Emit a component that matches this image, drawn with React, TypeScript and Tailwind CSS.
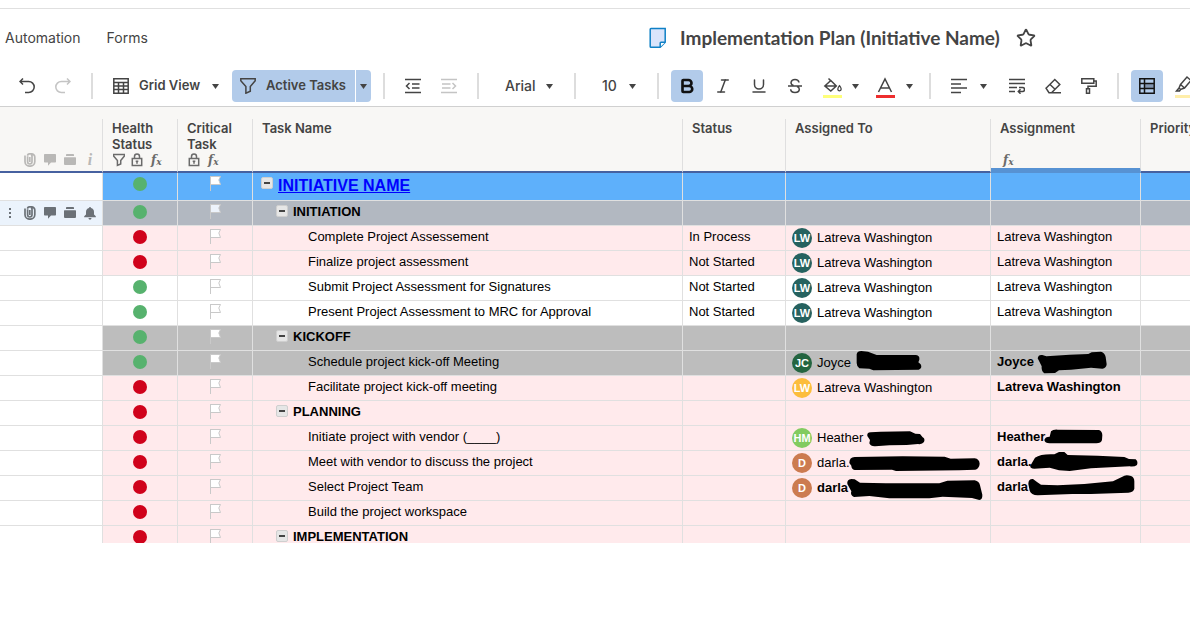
import type { ReactNode } from 'react';
import { useState } from 'react';
import { Bold, Italic, Star, Underline } from 'lucide-react';

type Tone = 'blue' | 'slate' | 'pink' | 'white' | 'gray';

interface Person {
  initials: string;
  color: string;
  name: string;
  bold?: boolean;
  mark?: string;
}

interface Row {
  id: number;
  task: string;
  level: 0 | 1 | 2;
  tone: Tone;
  health: 'green' | 'red';
  status?: string;
  assigned?: Person;
  assignment?: { name: string; bold?: boolean; mark?: string };
}

const latreva: Person = { initials: 'LW', color: 'bg-[#26625f]', name: 'Latreva Washington' };

const rows: Row[] = [
  { id: 1, task: 'INITIATIVE NAME', level: 0, tone: 'blue', health: 'green' },
  { id: 2, task: 'INITIATION', level: 1, tone: 'slate', health: 'green' },
  { id: 3, task: 'Complete Project Assessement', level: 2, tone: 'pink', health: 'red', status: 'In Process', assigned: latreva, assignment: { name: 'Latreva Washington' } },
  { id: 4, task: 'Finalize project assessment', level: 2, tone: 'pink', health: 'red', status: 'Not Started', assigned: latreva, assignment: { name: 'Latreva Washington' } },
  { id: 5, task: 'Submit Project Assessment for Signatures', level: 2, tone: 'white', health: 'green', status: 'Not Started', assigned: latreva, assignment: { name: 'Latreva Washington' } },
  { id: 6, task: 'Present Project Assessment to MRC for Approval', level: 2, tone: 'white', health: 'green', status: 'Not Started', assigned: latreva, assignment: { name: 'Latreva Washington' } },
  { id: 7, task: 'KICKOFF', level: 1, tone: 'gray', health: 'green' },
  {
    id: 8,
    task: 'Schedule project kick-off Meeting',
    level: 2,
    tone: 'gray',
    health: 'green',
    assigned: {
      initials: 'JC',
      color: 'bg-[#246540]',
      name: 'Joyce',
      mark: 'M212 10Q214 0 226 0L246 2L272 12L390 12Q402 14 400 26L397 34L404 40Q410 52 398 56L262 58L250 53L220 52Q212 46 212 36Z',
    },
    assignment: {
      name: 'Joyce',
      bold: true,
      mark: 'M140 22Q142 10 154 12L166 16L236 11L292 9L302 4L330 2Q342 6 344 18L347 40Q346 52 334 53L300 50L240 56L204 58L192 66L160 67Q150 60 152 46Z',
    },
  },
  {
    id: 9,
    task: 'Facilitate project kick-off meeting',
    level: 2,
    tone: 'pink',
    health: 'red',
    assigned: { ...latreva, color: 'bg-[#fcbd3c]' },
    assignment: { name: 'Latreva Washington', bold: true },
  },
  { id: 10, task: 'PLANNING', level: 1, tone: 'pink', health: 'red' },
  {
    id: 11,
    task: 'Initiate project with vendor (____)',
    level: 2,
    tone: 'pink',
    health: 'red',
    assigned: {
      initials: 'HM',
      color: 'bg-[#82cb60]',
      name: 'Heather',
      mark: 'M244 30Q242 20 254 19L284 17L372 16L388 23L402 24L410 34Q418 38 414 48Q408 56 396 54L362 57L310 58L268 61Q254 62 250 52L252 42Z',
    },
    assignment: {
      name: 'Heather',
      bold: true,
      mark: 'M160 42Q162 32 176 32L180 16Q186 10 200 11L324 12Q334 16 334 28L333 42Q330 52 316 52L176 52Q162 52 160 42Z',
    },
  },
  {
    id: 12,
    task: 'Meet with vendor to discuss the project',
    level: 2,
    tone: 'pink',
    health: 'red',
    assigned: {
      initials: 'D',
      color: 'bg-[#cc7b50]',
      name: 'darla.',
      mark: 'M190 36Q190 18 206 18L350 16L476 17L494 23L566 22Q580 24 581 38Q580 52 568 56L520 58L330 60L318 56L206 57Q196 54 196 44Z',
    },
    assignment: {
      name: 'darla.',
      bold: true,
      mark: 'M118 44L132 20Q150 8 190 10L204 3L220 3L230 12L320 14L400 18L414 24L434 25Q442 32 438 42Q430 48 416 46L300 52L236 60L204 58L176 50L130 53Q116 52 118 44Z',
    },
  },
  {
    id: 13,
    task: 'Select Project Team',
    level: 2,
    tone: 'pink',
    health: 'red',
    assigned: {
      initials: 'D',
      color: 'bg-[#cc7b50]',
      name: 'darla',
      bold: true,
      mark: 'M184 24Q182 10 196 9L206 10L222 20L300 22L460 22L484 14L566 13Q580 16 582 28L589 56Q590 70 580 72L558 66L470 62L430 67L310 67L250 60L204 63Q192 58 196 46Z',
    },
    assignment: {
      name: 'darla',
      bold: true,
      mark: 'M112 24Q112 8 126 9L138 18L150 26L200 28L280 24L366 16L394 2Q404 -6 420 0Q430 4 430 16L430 38Q428 48 412 50L300 54L244 54L140 58Q120 56 116 44Z',
    },
  },
  { id: 14, task: 'Build the project workspace', level: 2, tone: 'pink', health: 'red' },
  { id: 15, task: 'IMPLEMENTATION', level: 1, tone: 'pink', health: 'red' },
];

const tones: Record<Tone, string> = {
  blue: 'bg-[#5eb0fb]',
  slate: 'bg-[#b2b8c1]',
  pink: 'bg-[#ffeaec]',
  white: 'bg-white',
  gray: 'bg-[#bdbdbd]',
};

const indents = ['pl-2', 'pl-[23px]', 'pl-[55px]'];

/* ---------- Icons ---------- */

function Glyph({ children, className = 'size-4', box = '0 0 16 16', width = 1.5 }: { children: ReactNode; className?: string; box?: string; width?: number }) {
  return (
    <svg viewBox={box} className={`shrink-0 ${className}`} fill="none" stroke="currentColor" strokeWidth={width} aria-hidden="true">
      {children}
    </svg>
  );
}

const Caret = () => (
  <svg viewBox="0 0 7 5" className="h-[5px] w-[7px] shrink-0" fill="currentColor" aria-hidden="true">
    <path d="M0 0h7L3.5 5z" />
  </svg>
);

const funnelPath = 'M.8 .8h14.4v2L10.3 8.6v4.6l-4.4 2V8.6L.8 2.8z';

const ClipIcon = () => (
  <Glyph className="h-[14px] w-3" box="0 0 12 14" width={1.7}>
    <path d="M3.6 3.2v5.6a2.2 2.2 0 0 0 4.4 0V3.2a1.5 1.5 0 0 0-1-1.5M1 2.5v6.3a4.9 4.4 0 0 0 9.8 0V4.2A3.2 3.2 0 0 0 7.6 .9H5.4a1.8 1.8 0 0 0-1.8 1.8M5.8 4v5" />
  </Glyph>
);

const CommentIcon = () => (
  <svg viewBox="0 0 12 12" className="size-3" fill="currentColor" aria-hidden="true">
    <path d="M.8 0h10.4q.8 0 .8.8v6.9q0 .8-.8.8H7L4 11.8V8.5H.8Q0 8.5 0 7.7V.8Q0 0 .8 0z" />
  </svg>
);

const ProofIcon = () => (
  <svg viewBox="0 0 12 12" className="size-3" fill="currentColor" aria-hidden="true">
    <path d="M2.8 0h6.4q.8 0 .8.8V2H2V.8Q2 0 2.8 0zM.6 3.2h10.8q.6 0 .6.6V10q0 1-1 1H1q-1 0-1-1V3.8q0-.6.6-.6z" />
  </svg>
);

const BellIcon = () => (
  <svg viewBox="0 0 12 13" className="h-[13px] w-3" fill="currentColor" aria-hidden="true">
    <path d="M6 0q1 0 1 1Q10 1.900 10 5v2.500l1.800 1.800v.9H.2v-.9L2 7.500V5q0-3.100 3-4 0-1 1-1zM4.400 11h3.200q-.3 1.700-1.600 1.700T4.400 11z" />
  </svg>
);

const LockIcon = () => (
  <Glyph className="h-[14px] w-3" box="0 0 12 14" width={1.5}>
    <path d="M1.300 5.500h9.400v7H1.300zM3.500 5.500V3.400a2.500 2.500 0 0 1 5 0v2.100M6 8v2.800M4.700 8.300h2.600" />
  </Glyph>
);

const FunctionIcon = () => (
  <span aria-hidden="true" className="flex h-[14px] w-3 items-center pl-0.5 font-['DejaVu_Serif',serif] leading-none font-bold italic">
    <span className="text-[12px]">f</span>
    <span className="self-end text-[9px]">x</span>
  </span>
);

const FlagIcon = ({ pale }: { pale?: boolean }) => (
  <svg viewBox="0 0 11 15" className="h-[15px] w-[11px]" fill="none" stroke="#c9c9c9" aria-hidden="true">
    <path d="M.5 .5h10L8.800 4l1.700 4.500H.5z" fill={pale ? '#edf3fb' : '#fff'} />
    <path d="M.5 0V15" />
  </svg>
);

/* ---------- Toolbar ---------- */

function Tool({ label, active, muted, children }: { label: string; active?: boolean; muted?: boolean; children: ReactNode }) {
  return (
    <button
      type="button"
      aria-label={label}
      className={`flex size-8 shrink-0 items-center justify-center rounded-sm ${active ? 'bg-[#b2cbea] text-[#111]' : muted ? 'text-[#c4c4c4]' : 'hover:bg-gray-100'}`}
    >
      {children}
    </button>
  );
}

const CaretTool = ({ label }: { label: string }) => (
  <button type="button" aria-label={label} className="flex h-8 w-4 shrink-0 items-center justify-center">
    <Caret />
  </button>
);

const Divider = () => <div className="mx-3 h-[26px] w-0.5 shrink-0 bg-[#dddddd]" />;

function Picker({ label, options, className }: { label: string; options: string[]; className: string }) {
  return (
    <div className="relative flex h-8 shrink-0 items-center">
      <select aria-label={label} className={`h-8 appearance-none bg-transparent pl-[14px] text-sm font-medium outline-none ${className}`}>
        {options.map(option => (
          <option key={option}>{option}</option>
        ))}
      </select>
      <span className="pointer-events-none absolute right-[9px]">
        <Caret />
      </span>
    </div>
  );
}

function Toolbar() {
  return (
    <div className="flex h-10 items-start overflow-hidden border-b border-[#d0d0d0] pt-[3px] pl-[11px] text-[#444]">
      <div className="flex shrink-0 items-center">
        <div className="flex gap-1">
          <Tool label="Undo">
            <Glyph>
              <path d="M1 3.500h8.700a5.500 5.500 0 0 1 0 11H6M4 .5l-3 3 3 3" />
            </Glyph>
          </Tool>
          <Tool label="Redo" muted>
            <Glyph>
              <path d="M15 3.500H6.300a5.500 5.500 0 0 0 0 11H10M12 .5l3 3-3 3" />
            </Glyph>
          </Tool>
        </div>
        <Divider />
        <button type="button" className="flex h-8 w-[127px] items-center pl-2 text-[13px] font-semibold">
          <Glyph>
            <path d="M.8 .8h14.400v14.400H.8zM.8 4.500h14.400M.8 8h14.400M.8 11.600h14.400M5.500 4.500v10.700M10.500 4.500v10.700" />
          </Glyph>
          <span className="ml-2.5 flex-1 text-left whitespace-nowrap">Grid View</span>
          <span className="mr-[13px]">
            <Caret />
          </span>
        </button>
        <div className="flex gap-px">
          <button type="button" className="flex h-8 w-[123px] items-center gap-2.5 rounded-l-sm bg-[#b2cbea] pl-2 text-[13px] font-semibold whitespace-nowrap">
            <Glyph>
              <path d={funnelPath} />
            </Glyph>
            Active Tasks
          </button>
          <button type="button" aria-label="Filter options" className="flex h-8 w-[15px] items-center justify-center rounded-r-sm bg-[#b2cbea]">
            <Caret />
          </button>
        </div>
        <Divider />
        <div className="flex gap-1">
          <Tool label="Outdent">
            <Glyph>
              <path d="M0 1.500h16M7 6h7.500M7 10h7.500M0 14.500h16M4.500 5 1.500 8l3 3" />
            </Glyph>
          </Tool>
          <Tool label="Indent" muted>
            <Glyph>
              <path d="M0 1.500h16M1 6h8.500M1 10h8.500M0 14.500h16M11.500 5l3 3-3 3" />
            </Glyph>
          </Tool>
        </div>
        <Divider />
        <Picker label="Font" options={['Arial', 'Tahoma', 'Verdana']} className="w-[71px]" />
        <Divider />
        <Picker label="Font size" options={['10', '12', '14']} className="w-[57px]" />
        <Divider />
        <div className="flex gap-1">
          <Tool label="Bold" active>
            <Bold className="size-[18px]" strokeWidth={3.5} />
          </Tool>
          <Tool label="Italic">
            <Italic className="size-[18px]" strokeWidth={2} />
          </Tool>
          <Tool label="Underline">
            <Underline className="size-[18px]" strokeWidth={2} />
          </Tool>
          <Tool label="Strikethrough">
            <Glyph>
              <path d="M12 4.500Q11.500 1.500 8 1.500T4 4.500Q4 6.700 6.500 7.500M1 8h14M10 8.500q2.300 .8 2.300 2.800Q12.300 14.500 8 14.500T3.700 11.300" />
            </Glyph>
          </Tool>
          <Tool label="Fill color">
            <Glyph className="size-8" box="0 0 32 32">
              <path d="M9.800 16l6-5.500 5.500 5.500-5.500 5zM10 16h11M13.500 8.500l3 3" />
              <path d="M24.500 15.700q1.700 2.200 1.700 3.400a1.700 1.700 0 0 1-3.400 0q0-1.200 1.700-3.400z" strokeWidth="1.300" />
              <path d="M8 26.500h19" stroke="#feff7a" strokeWidth="3" />
            </Glyph>
          </Tool>
        </div>
        <CaretTool label="Fill color options" />
        <div className="w-1.5" />
        <Tool label="Text color">
          <Glyph className="size-8" box="0 0 32 32">
            <path d="M9.500 22l6.500-13 6.500 13M12 18h8" />
            <path d="M7 26.500h19" stroke="#ee2e2e" strokeWidth="3" />
          </Glyph>
        </Tool>
        <CaretTool label="Text color options" />
        <Divider />
        <Tool label="Align left">
          <Glyph>
            <path d="M0 1.500h16M0 6h10M0 10h16M0 14.500h10" />
          </Glyph>
        </Tool>
        <CaretTool label="Align options" />
        <div className="ml-2.5 flex gap-1">
          <Tool label="Wrap text">
            <Glyph>
              <path d="M0 1.500h16M0 5.500h16M0 9.500h8M0 13.500h6M10 9.500h3.500a2 2 0 0 1 0 4H9.500M11.500 11.300l-2.200 2.200 2.200 2.200" />
            </Glyph>
          </Tool>
          <Tool label="Clear formatting">
            <Glyph>
              <path d="M1 10.200 9.800 1.500l5 5-8.300 8.200H4zM5 6.500l5.300 5M4 14.700h12" />
            </Glyph>
          </Tool>
          <Tool label="Format painter">
            <Glyph>
              <path d="M.8 .8h12v4.400H.8zM12.800 3H15.200v5.200H7v2.500M5.500 10.700h3v4.500h-3z" />
            </Glyph>
          </Tool>
        </div>
        <Divider />
        <div className="flex gap-1">
          <Tool label="Highlight changes" active>
            <Glyph>
              <path d="M6 6h9v4.500H6z" fill="#8295b0" stroke="none" />
              <path d="M.8 .8h14.400v14.400H.8zM5.500 .8v14.400M.8 5.500h14.400M.8 10.500h14.400" />
            </Glyph>
          </Tool>
          <Tool label="Highlighter">
            <Glyph className="size-8" box="0 0 32 32">
              <path d="M13.500 14.500l6.500-7.500 4 3.500-6.500 7.500-4 1.500-1.500-1.500zM13.500 14.500l4 3.500M12 18l-2.500 3h3l1-1.500" />
              <path d="M8 26.500h19" stroke="#ffeeaa" strokeWidth="3" />
            </Glyph>
          </Tool>
        </div>
      </div>
    </div>
  );
}

/* ---------- Sheet ---------- */

function HeaderCell({ label, selected, children }: { label: string; selected?: boolean; children?: ReactNode }) {
  return (
    <th
      scope="col"
      className={`h-[54px] border-r border-r-[#dfdfdf] p-0 text-left align-top font-semibold last:border-r-0 ${selected ? 'border-b-[5px] border-b-[#5792d3]' : 'border-b-2 border-b-[#4661a0]'}`}
    >
      <div className="flex h-12 flex-col justify-between pt-px pl-[9px] text-[13px] leading-4">
        <span>{label}</span>
        {children && <span className="flex gap-1.5 pl-px text-[#6b6b6b]">{children}</span>}
      </div>
    </th>
  );
}

const Redaction = ({ path }: { path: string }) => (
  <svg viewBox="0 0 615 75" className="pointer-events-none absolute top-0 left-0 h-[25px] w-[205px] overflow-visible" fill="#000" aria-hidden="true">
    <path d={path} />
  </svg>
);

function SheetRow({ row, last }: { row: Row; last: boolean }) {
  const hovered = row.tone === 'slate';
  const height = last ? 'h-[17px] overflow-hidden' : row.level === 0 ? 'h-[27px]' : 'h-6';
  const cell = `border-r border-[#e0e0e0] p-0 last:border-r-0 ${last ? '' : 'border-b'}`;
  const fill = `${cell} ${tones[row.tone]}`;

  return (
    <tr>
      <td className={`${cell} ${hovered ? 'bg-[#ebf3fc]' : 'bg-white'}`}>
        <div className={`flex items-center text-[#6b7177] ${height}`}>
          {hovered && (
            <>
              <button type="button" aria-label="Row menu" className="flex w-5 justify-center">
                <svg viewBox="0 0 2 12" className="h-3 w-0.5" fill="currentColor" aria-hidden="true">
                  <path d="M0 1h2v2H0zM0 5h2v2H0zM0 9h2v2H0z" />
                </svg>
              </button>
              <button type="button" aria-label="Attachments" className="flex w-5 justify-center"><ClipIcon /></button>
              <button type="button" aria-label="Comments" className="flex w-5 justify-center"><CommentIcon /></button>
              <button type="button" aria-label="Proofs" className="flex w-5 justify-center"><ProofIcon /></button>
              <button type="button" aria-label="Reminders" className="flex w-5 justify-center"><BellIcon /></button>
            </>
          )}
        </div>
      </td>
      <td className={fill}>
        <div className={`flex items-start justify-center pt-1 ${height}`}>
          <span className={`size-[14px] shrink-0 rounded-full ${row.health === 'green' ? 'bg-[#57b26e]' : 'bg-[#d0021b]'}`} />
        </div>
      </td>
      <td className={fill}>
        <div className={`flex items-start justify-center pt-[3px] pl-px ${height}`}>
          <FlagIcon pale={hovered} />
        </div>
      </td>
      <td className={fill}>
        <div className={`flex items-start gap-[5px] whitespace-nowrap ${indents[row.level]} ${height}`}>
          {row.level < 2 && (
            <button
              type="button"
              aria-label={`Collapse ${row.task}`}
              className="mt-1 flex size-3 shrink-0 items-center justify-center rounded-xs border border-[#cfcfcf] bg-[#e6e6e6]"
            >
              <span className="h-0.5 w-1.5 bg-[#444]" />
            </button>
          )}
          {row.level === 0 ? (
            <a href="#initiative" className="text-base leading-[26px] font-bold text-[#0000ff] underline">{row.task}</a>
          ) : (
            <span className={`leading-[22px] ${row.level === 1 ? 'font-bold' : ''}`}>{row.task}</span>
          )}
        </div>
      </td>
      <td className={fill}>
        <div className={`pl-1.5 leading-[22px] whitespace-nowrap ${height}`}>{row.status}</div>
      </td>
      <td className={fill}>
        <div className={`relative flex items-center gap-[5px] pl-1.5 whitespace-nowrap ${height}`}>
          {row.assigned && (
            <>
              <span className={`flex size-5 shrink-0 items-center justify-center rounded-full text-[11px] font-bold text-white ${row.assigned.color}`}>
                {row.assigned.initials}
              </span>
              <span className={row.assigned.bold ? 'font-bold' : ''}>{row.assigned.name}</span>
              {row.assigned.mark && <Redaction path={row.assigned.mark} />}
            </>
          )}
        </div>
      </td>
      <td className={fill}>
        <div className={`relative pl-1.5 leading-[22px] whitespace-nowrap ${height}`}>
          <span className={row.assignment?.bold ? 'font-bold' : ''}>{row.assignment?.name}</span>
          {row.assignment?.mark && <Redaction path={row.assignment.mark} />}
        </div>
      </td>
      <td className={fill} />
    </tr>
  );
}

export default function App() {
  const [starred, setStarred] = useState(false);

  return (
    <div className="overflow-hidden bg-white pt-2 font-['Inter','Liberation_Sans',sans-serif]">
      {/* Title bar */}
      <header className="grid h-[59px] grid-cols-[649px_1fr] items-center border-t border-[#e0e0e0] text-[#444]">
        <nav className="flex gap-[26px] pl-[5px] text-sm">
          <a href="#automation">Automation</a>
          <a href="#forms">Forms</a>
        </nav>
        <div className="flex items-center whitespace-nowrap">
          <svg viewBox="0 0 18 22" className="h-[22px] w-[18px] shrink-0" fill="#d9e4fb" stroke="#0f80c6" strokeWidth="1.500" aria-hidden="true">
            <path d="M2 1.500h14.200v13.700l-5 5H2q-.8 0-.8-.8V2.300q0-.8.8-.8z" />
            <path d="M11.200 20v-4q0-.8.8-.8h4.200" fill="#fff" />
          </svg>
          <h1 className="ml-[13px] font-['Lato',sans-serif] text-[19px] leading-6 font-bold">Implementation Plan (Initiative Name)</h1>
          <button type="button" aria-label="Add to favorites" aria-pressed={starred} onClick={() => setStarred(!starred)} className="ml-4">
            <Star className="size-5" strokeWidth={2.2} strokeLinejoin="miter" fill={starred ? 'currentColor' : 'none'} />
          </button>
        </div>
      </header>

      <Toolbar />

      {/* Grid */}
      <main className="overflow-hidden bg-[#f8f7f5] pt-3">
        <table className="w-full table-fixed border-separate border-spacing-0 font-['Liberation_Sans',Arial,sans-serif] text-[13px] text-black">
          <colgroup>
            <col className="w-[103px]" />
            <col className="w-[75px]" />
            <col className="w-[75px]" />
            <col className="w-[430px]" />
            <col className="w-[103px]" />
            <col className="w-[205px]" />
            <col className="w-[150px]" />
            <col />
          </colgroup>
          <thead className="font-['Inter','Liberation_Sans',sans-serif] text-[#444]">
            <tr>
              <th scope="col" aria-label="Row indicators" className="h-[54px] border-r border-b-2 border-r-[#dfdfdf] border-b-[#4661a0] p-0 align-bottom">
                <div className="flex h-[22px] items-center pl-5 text-[#b9b8b6]">
                  <span className="flex w-5 justify-center"><ClipIcon /></span>
                  <span className="flex w-5 justify-center"><CommentIcon /></span>
                  <span className="flex w-5 justify-center"><ProofIcon /></span>
                  <span className="flex w-5 justify-center font-['Liberation_Serif',serif] text-base leading-none font-bold italic">i</span>
                </div>
              </th>
              <HeaderCell label="Health Status">
                <Glyph className="h-[14px] w-3" width={2}>
                  <path d={funnelPath} />
                </Glyph>
                <LockIcon />
                <FunctionIcon />
              </HeaderCell>
              <HeaderCell label="Critical Task">
                <LockIcon />
                <FunctionIcon />
              </HeaderCell>
              <HeaderCell label="Task Name" />
              <HeaderCell label="Status" />
              <HeaderCell label="Assigned To" />
              <HeaderCell label="Assignment" selected>
                <FunctionIcon />
              </HeaderCell>
              <HeaderCell label="Priority" />
            </tr>
          </thead>
          <tbody>
            {rows.map((row, index) => (
              <SheetRow key={row.id} row={row} last={index === rows.length - 1} />
            ))}
          </tbody>
        </table>
      </main>
    </div>
  );
}
